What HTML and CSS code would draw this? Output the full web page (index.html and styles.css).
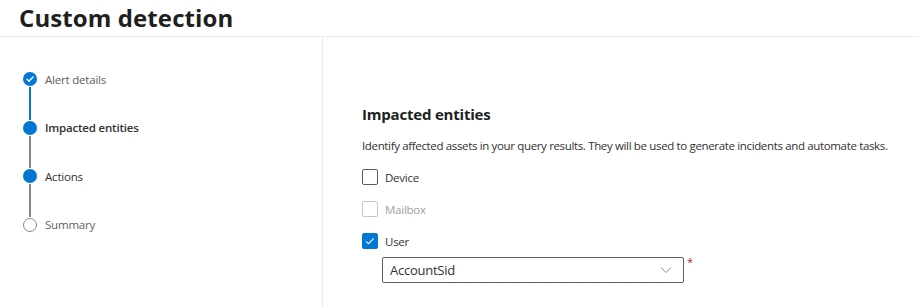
FILE: index.html
```html
<!DOCTYPE html>
<html lang="en">
<head>
    <meta charset="UTF-8">
    <meta name="viewport" content="width=device-width, initial-scale=1.0">
    <link rel="stylesheet" href="styles.css">
</head>
<body>
    <header class="page-header">
        <h1>Custom detection</h1>
    </header>
    <div class="wizard">
        <nav class="steps">
            <div class="step done">
                <span class="dot">
                    <svg viewBox="0 0 14 14" width="14" height="14"><path d="M4 7.2l2 2 4-4.2" fill="none" stroke="#fff" stroke-width="1.4" stroke-linecap="round" stroke-linejoin="round"/></svg>
                </span>
                <span class="label">Alert details</span>
            </div>
            <div class="connector blue"></div>
            <div class="step current">
                <span class="dot"></span>
                <span class="label strong">Impacted entities</span>
            </div>
            <div class="connector"></div>
            <div class="step current">
                <span class="dot"></span>
                <span class="label">Actions</span>
            </div>
            <div class="connector"></div>
            <div class="step">
                <span class="dot empty"></span>
                <span class="label">Summary</span>
            </div>
        </nav>
        <main class="content">
            <h2>Impacted entities</h2>
            <p class="desc">Identify affected assets in your query results. They will be used to generate incidents and automate tasks.</p>
            <div class="check-row">
                <span class="box"></span>
                <span>Device</span>
            </div>
            <div class="check-row disabled">
                <span class="box"></span>
                <span>Mailbox</span>
            </div>
            <div class="check-row">
                <span class="box checked">
                    <svg viewBox="0 0 16 16" width="16" height="16"><path d="M3.5 8.3l2.8 2.8 6-6.2" fill="none" stroke="#fff" stroke-width="1.2"/></svg>
                </span>
                <span>User</span>
            </div>
            <div class="select-row">
                <div class="select">
                    <span>AccountSid</span>
                    <svg viewBox="0 0 12 8" width="12" height="8"><path d="M1 1.5l5 5 5-5" fill="none" stroke="#8a8886" stroke-width="1"/></svg>
                </div>
                <span class="required">*</span>
            </div>
        </main>
    </div>
</body>
</html>
```

FILE: styles.css
```css
body {
    margin: 0;
    font-family: "Open Sans", "Noto Sans", sans-serif;
    color: #323130;
    background-color: #fff;
}

.page-header {
    height: 36px;
    border-bottom: 1px solid #edebe9;
}

.page-header h1 {
    margin: 0;
    padding: 1px 0 0 19px;
    font-size: 24px;
    font-weight: 700;
    line-height: 33px;
    letter-spacing: 0.1px;
    color: #201f1e;
}

.wizard {
    display: flex;
    height: 270px;
}

.steps {
    flex-shrink: 0;
    width: 323px;
    border-right: 1px solid #edebe9;
    padding: 34px 0 0 23px;
    box-sizing: border-box;
}

.step {
    display: flex;
    align-items: center;
    height: 16px;
    font-size: 11.5px;
    letter-spacing: -0.2px;
    color: #605e5c;
}

.step.current .label {
    color: #323130;
}

.label.strong {
    font-weight: 600;
}

.dot {
    width: 14px;
    height: 14px;
    border-radius: 50%;
    background-color: #0078d4;
    display: flex;
    align-items: center;
    justify-content: center;
    box-sizing: border-box;
    margin-right: 8px;
}

.dot.empty {
    background-color: #fff;
    border: 1.5px solid #8a8886;
}

.connector {
    width: 2px;
    height: 32.6px;
    margin-left: 6px;
    background-color: #8a8886;
}

.connector.blue {
    background-color: #0078d4;
}

.content {
    padding: 65px 0 0 39px;
    font-size: 11.5px;
    letter-spacing: -0.25px;
}

.content h2 {
    margin: 0;
    font-size: 15px;
    font-weight: 700;
    line-height: 24px;
    letter-spacing: -0.2px;
    color: #201f1e;
}

.desc {
    margin: 12px 0 15px;
    line-height: 16px;
    white-space: nowrap;
    letter-spacing: -0.35px;
    color: #323130;
}

.check-row {
    display: flex;
    align-items: center;
    gap: 7px;
    height: 16px;
    margin-bottom: 16px;
    color: #323130;
}

.check-row.disabled {
    color: #a19f9d;
}

.box {
    width: 16px;
    height: 16px;
    border: 1px solid #605e5c;
    border-radius: 2px;
    box-sizing: border-box;
    display: flex;
    align-items: center;
    justify-content: center;
}

.disabled .box {
    border-color: #c8c6c4;
}

.box.checked {
    background-color: #0078d4;
    border-color: #0078d4;
}

.select-row {
    display: flex;
    align-items: flex-start;
    margin: -8px 0 0 20px;
}

.select {
    width: 302px;
    height: 26px;
    border: 1px solid #605e5c;
    border-radius: 2px;
    box-sizing: border-box;
    display: flex;
    align-items: center;
    justify-content: space-between;
    padding: 0 11px 0 7px;
    font-size: 13px;
}

.required {
    color: #a4262c;
    font-size: 11px;
    margin-left: 3px;
    line-height: 10px;
}
```
